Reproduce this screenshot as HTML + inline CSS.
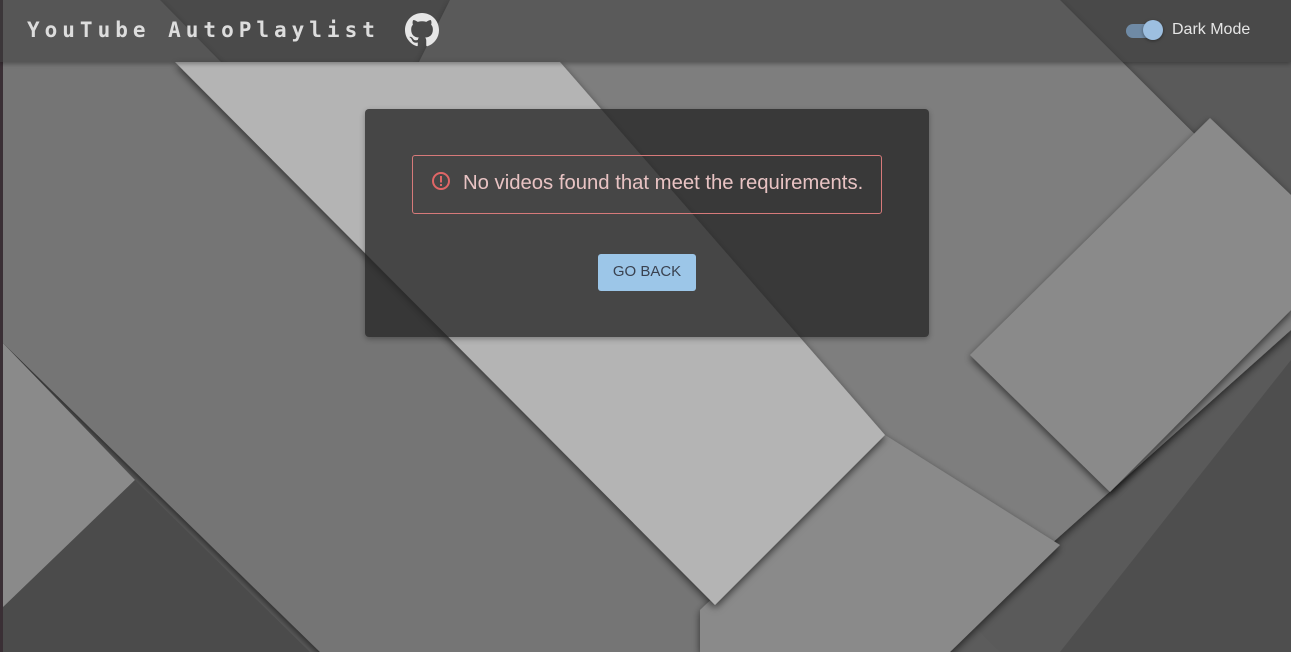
<!DOCTYPE html>
<html><head><meta charset="utf-8"><style>
html,body{margin:0;width:1291px;height:652px;overflow:hidden;background:#6f6f6f;font-family:"Liberation Sans",sans-serif}
svg.bg{position:absolute;left:0;top:0}
.hdr{position:absolute;left:0;top:0;width:1291px;height:62px;background:rgba(60,60,60,0.55);box-shadow:0 2px 4px rgba(0,0,0,.3)}
.title{position:absolute;left:27px;top:18px;font-family:"DejaVu Sans Mono","Liberation Mono",monospace;font-weight:bold;font-size:21px;letter-spacing:5px;color:#ddd}
.gh{position:absolute;left:405px;top:13px}
.tog{position:absolute;left:1126px;top:24px;width:34px;height:14px;border-radius:7px;background:#6f8aa5}
.knob{position:absolute;left:1143px;top:20px;width:20px;height:20px;border-radius:50%;background:#9dbfe0;box-shadow:0 1px 3px rgba(0,0,0,.4)}
.dm{position:absolute;left:1172px;top:21px;font-size:16px;color:#e6e6e6}
.card{position:absolute;left:365px;top:109px;width:564px;height:228px;background:rgba(36,36,36,0.77);border-radius:4px;box-shadow:0 2px 6px rgba(0,0,0,.3)}
.alert{position:absolute;left:412px;top:155px;width:468px;height:57px;border:1px solid #d77a7a;border-radius:3px}
.alert span{position:absolute;left:50px;top:16px;font-size:20.3px;color:#e8c3c3}
.ic{position:absolute;left:18px;top:15px}
.btn{position:absolute;left:598px;top:254px;width:98px;height:37px;background:#9cc6e8;border-radius:3px;color:#3a4250;font-size:15px;text-align:center;line-height:35px}
</style></head><body>
<svg class="bg" width="1291" height="652" viewBox="0 0 1291 652">
<defs><filter id="s" x="-20%" y="-20%" width="140%" height="140%"><feDropShadow dx="0" dy="3" stdDeviation="4" flood-color="#000" flood-opacity="0.6"/></filter></defs>
<rect width="1291" height="652" fill="#5c5c5c"/>
<polygon points="900,0 1291,0 1291,652 1000,652 700,350" fill="#5a5a5a"/>
<polygon points="450,0 1060,0 1291,230 1291,330 930,652 640,652 300,300" fill="#7e7e7e" filter="url(#s)"/>
<polygon points="0,0 160,0 800,652 320,652 0,340" fill="#757575" filter="url(#s)"/>
<polygon points="0,340 135,480 0,610" fill="#8a8a8a"/>
<polygon points="0,610 135,480 310,652 0,652" fill="#4b4b4b"/>
<polygon points="885,435 1060,545 950,652 700,652 700,610" fill="#8a8a8a" filter="url(#s)"/>
<polygon points="175,62 560,62 885,435 715,605" fill="#b4b4b4" filter="url(#s)"/>
<polygon points="1210,118 1291,195 1291,310 1110,492 970,355" fill="#8a8a8a" filter="url(#s)"/>
<polygon points="1291,360 1291,652 1060,652" fill="#4e4e4e"/>
<rect x="0" y="0" width="3" height="652" fill="#3a2f35"/>
</svg>
<div class="hdr"></div>
<div class="title">YouTube AutoPlaylist</div>
<svg class="gh" width="34" height="34" viewBox="0 0 16 16"><path fill="#e6e6e6" d="M8 0C3.58 0 0 3.58 0 8c0 3.540 2.29 6.53 5.47 7.59.4.07.55-.17.55-.38v-1.33c-2.23.48-2.7-1.07-2.7-1.070-.36-.92-.89-1.17-.89-1.17-.73-.5.06-.49.06-.49.8.06 1.23.83 1.23.83.71 1.22 1.87.87 2.33.66.07-.52.28-.87.5-1.07-1.78-.2-3.64-.89-3.64-3.95 0-.87.31-1.59.82-2.15-.08-.2-.36-1.02.08-2.12 0 0 .67-.21 2.2.82a7.6 7.6 0 0 1 4 0c1.53-1.04 2.2-.82 2.2-.82.44 1.1.16 1.92.08 2.12.51.56.82 1.27.82 2.15 0 3.07-1.87 3.75-3.65 3.95.29.25.54.73.54 1.48v2.2c0 .21.15.46.55.38A8 8 0 0 0 16 8c0-4.42-3.58-8-8-8z"/></svg>
<div class="tog"></div><div class="knob"></div>
<div class="dm">Dark Mode</div>
<div class="card"></div>
<div class="alert"><svg class="ic" width="20" height="20" viewBox="0 0 20 20"><circle cx="10" cy="10" r="8" fill="none" stroke="#e06666" stroke-width="2"/><rect x="9" y="5" width="2" height="6.5" fill="#e06666"/><rect x="9" y="13" width="2" height="2" fill="#e06666"/></svg><span>No videos found that meet the requirements.</span></div>
<div class="btn">GO BACK</div>
</body></html>
